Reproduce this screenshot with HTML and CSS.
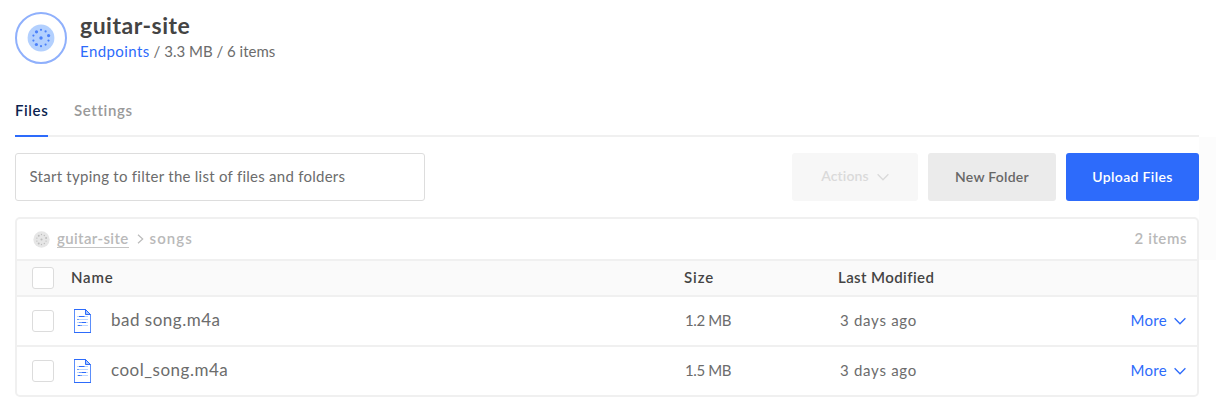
FILE: index.html
```html
<!DOCTYPE html>
<html lang="en">
<head>
<meta charset="utf-8">
<title>guitar-site</title>
<link rel="stylesheet" href="styles.css">
</head>
<body>
<svg class="defs" width="0" height="0">
  <symbol id="space" viewBox="0 0 28 28">
    <circle class="disc" cx="14" cy="14" r="13.4"/>
    <g class="dots">
      <circle cx="14" cy="14" r="1.7"/><circle cx="14" cy="5.8" r="1.1"/><circle cx="14" cy="22.2" r="1.1"/>
      <circle cx="9.5" cy="7.8" r="1.6"/><circle cx="18.6" cy="7.4" r="1.1"/><circle cx="21.6" cy="11.6" r="1.6"/>
      <circle cx="6.4" cy="11.6" r="1.1"/><circle cx="6.4" cy="16.6" r="1.1"/><circle cx="21.5" cy="16.6" r="1.1"/>
      <circle cx="9.4" cy="20.5" r="1.6"/><circle cx="18.6" cy="20.6" r="1.1"/>
    </g>
  </symbol>
  <symbol id="chevron" viewBox="0 0 12 8"><path d="M0.6 1.2 L6 6.7 L11.4 1.2"/></symbol>
  <symbol id="file" viewBox="0 0 17 24">
    <path d="M0.5 0.5H11.5L16.5 5.5V23.5H0.5Z" fill="#fff" stroke="#5b8efa"/>
    <path d="M0 0.5H12M0 23.5H17" stroke="#2d6bfb"/>
    <path d="M11.5 0.5V5.5H16.5Z" fill="#a9c6fb" stroke="#2d6bfb"/>
    <path d="M3 7.5H14M3 10.5H14M3 13.5H14M3 16.5H14" stroke="#bcd6ff"/>
    <path d="M5 7.5H10M8 13.5H12M4 16.5H6" stroke="#2d6bfb"/>
    <path d="M3 10.5H5M10 7.5H11M5 13.5H8M6 16.5H8" stroke="#6f9ffc"/>
  </symbol>
</svg>
<main class="page">
  <header class="head">
    <div class="avatar"><svg class="space-icon"><use href="#space"/></svg></div>
    <div class="head-text">
      <h1 class="title">guitar-site</h1>
      <p class="meta"><a class="link">Endpoints</a> / 3.3 MB / 6 items</p>
    </div>
  </header>
  <nav class="tabs">
    <a class="tab tab-active">Files</a>
    <a class="tab">Settings</a>
  </nav>
  <section class="toolbar">
    <input class="filter" type="text" placeholder="Start typing to filter the list of files and folders">
    <div class="buttons">
      <button class="btn btn-actions"><span class="btn-label">Actions</span><svg class="chev"><use href="#chevron"/></svg></button>
      <button class="btn btn-new">New Folder</button>
      <button class="btn btn-upload">Upload Files</button>
    </div>
  </section>
  <section class="panel">
    <div class="crumbs">
      <svg class="crumb-icon"><use href="#space"/></svg>
      <a class="crumb-root">guitar-site</a>
      <svg class="crumb-sep" viewBox="0 0 7 10"><path d="M1 0.7L5.7 5L1 9.3"/></svg>
      <span class="crumb-current">songs</span>
      <span class="count">2 items</span>
    </div>
    <div class="row row-head">
      <span class="box"></span>
      <span class="h-name">Name</span>
      <span class="h-size">Size</span>
      <span class="h-date">Last Modified</span>
    </div>
    <div class="row">
      <span class="box"></span>
      <svg class="file-icon"><use href="#file"/></svg>
      <span class="name">bad song.m4a</span>
      <span class="size">1.2 MB</span>
      <span class="date">3 days ago</span>
      <a class="more"><span class="more-label">More</span><svg class="chev"><use href="#chevron"/></svg></a>
    </div>
    <div class="row">
      <span class="box"></span>
      <svg class="file-icon"><use href="#file"/></svg>
      <span class="name">cool_song.m4a</span>
      <span class="size">1.5 MB</span>
      <span class="date">3 days ago</span>
      <a class="more"><span class="more-label">More</span><svg class="chev"><use href="#chevron"/></svg></a>
    </div>
  </section>
</main>
</body>
</html>
```
FILE: styles.css
```css
* { box-sizing: border-box; }
body {
  margin: 0;
  height: 413px;
  overflow: hidden;
  font-family: Lato, "Liberation Sans", sans-serif;
  font-size: 15px;
  line-height: 20px;
  font-variant-ligatures: none;
  color: #6c6c6c;
  background: linear-gradient(#fcfcfc, #fcfcfc) 1199px 137px / 17px 123px no-repeat #fff;
}
.defs { position: absolute; }
.page { width: 1214px; padding: 12px 15px 0; }
.head { display: flex; height: 52px; gap: 13px; }
.avatar {
  width: 52px; height: 52px;
  border: 2px solid #8fb0fc; border-radius: 50%;
  display: grid; place-items: center;
}
.space-icon { width: 28px; height: 28px; }
.disc { fill: var(--disc, #b3d0fe); }
.dots { fill: var(--dots, #4a80fa); }
.title { margin: 0; font-size: 23px; line-height: 26px; font-weight: 700; letter-spacing: .5px; color: #444; }
.meta { margin: 3px 0 0; letter-spacing: 0; }
.link { color: #2d6bfb; letter-spacing: .43px; }
.tabs {
  display: flex; gap: 26px; height: 41px; margin-top: 32px;
  border-bottom: 2px solid #f0f0f0;
}
.tab { height: 41px; padding-top: 4px; font-weight: 600; letter-spacing: .65px; color: #999; }
.tab-active { width: 33px; letter-spacing: .6px; color: #0c1f4f; border-bottom: 2px solid #2d6bfb; }
.toolbar { display: flex; justify-content: space-between; margin-top: 16px; height: 48px; }
.filter {
  width: 410px; height: 48px; padding: 0 14px 2px 13.5px;
  border: 1px solid #ddd; border-radius: 3px; background: #fff;
  font: inherit; letter-spacing: .26px; color: #6c6c6c;
}
.filter::placeholder { color: #6c6c6c; opacity: 1; }
.buttons { display: flex; gap: 10px; }
.btn {
  display: flex; align-items: center; justify-content: center;
  height: 48px; padding: 0; border: 0; border-radius: 3px;
  font: 600 14px/20px Lato, "Liberation Sans", sans-serif;
}
.btn-actions { width: 126px; gap: 8px; background: #f7f7f7; color: #dadada; letter-spacing: .15px; }
.btn-label { padding-bottom: 2px; }
.btn-new { width: 128px; background: #ebebeb; color: #676767; letter-spacing: .25px; }
.btn-upload { width: 133px; background: #2d6bfb; color: #fff; letter-spacing: .35px; }
.chev { width: 12px; height: 8px; fill: none; stroke: currentColor; stroke-width: 1.3; }
.panel { margin-top: 16px; border: 2px solid #f0f0f0; border-radius: 5px; background: #fff; }
.crumbs {
  display: flex; align-items: center; height: 40px; padding: 0 10px 0 16px;
  font-weight: 600; color: #b9b9b9;
}
.crumb-icon { width: 17px; height: 17px; --disc: #e6e6e6; --dots: #bdbdbd; }
.crumb-root { margin-left: 7px; line-height: 17px; letter-spacing: .36px; border-bottom: 1px solid #c4c4c4; }
.crumb-sep { width: 7px; height: 10px; margin: 0 6px 0 8px; fill: none; stroke: #bbb; stroke-width: 1.2; }
.crumb-current { padding-bottom: 2px; letter-spacing: 1.05px; }
.count { margin-left: auto; padding-bottom: 2px; letter-spacing: .55px; }
.row {
  display: grid; grid-template-columns: 26px 13px 27px 573px 154px 1fr auto;
  align-items: center;
  height: 50px; padding: 0 11px 0 15px; border-top: 2px solid #f0f0f0;
}
.row-head { height: 36px; background: #fafafa; font-weight: 600; color: #444; }
.box { grid-column: 1; width: 22px; height: 22px; border: 1px solid #dcdcdc; border-radius: 3px; background: #fff; }
.file-icon { grid-column: 3; width: 17px; height: 24px; margin-left: 3px; }
.h-name, .h-size, .h-date, .name, .size, .date, .more-label { padding-bottom: 2px; }
.h-name { grid-column: 3 / 5; letter-spacing: .8px; }
.h-size { grid-column: 5; margin-left: 13px; letter-spacing: .9px; }
.h-date { grid-column: 6; margin-left: 13px; letter-spacing: .4px; }
.name { grid-column: 4; margin-left: 13px; font-size: 17px; letter-spacing: .5px; }
.size { grid-column: 5; margin-left: 14px; letter-spacing: -.4px; }
.date { grid-column: 6; margin-left: 15px; letter-spacing: .72px; }
.more { grid-column: 7; display: flex; align-items: center; gap: 7px; letter-spacing: .3px; color: #2d6bfb; }
```
